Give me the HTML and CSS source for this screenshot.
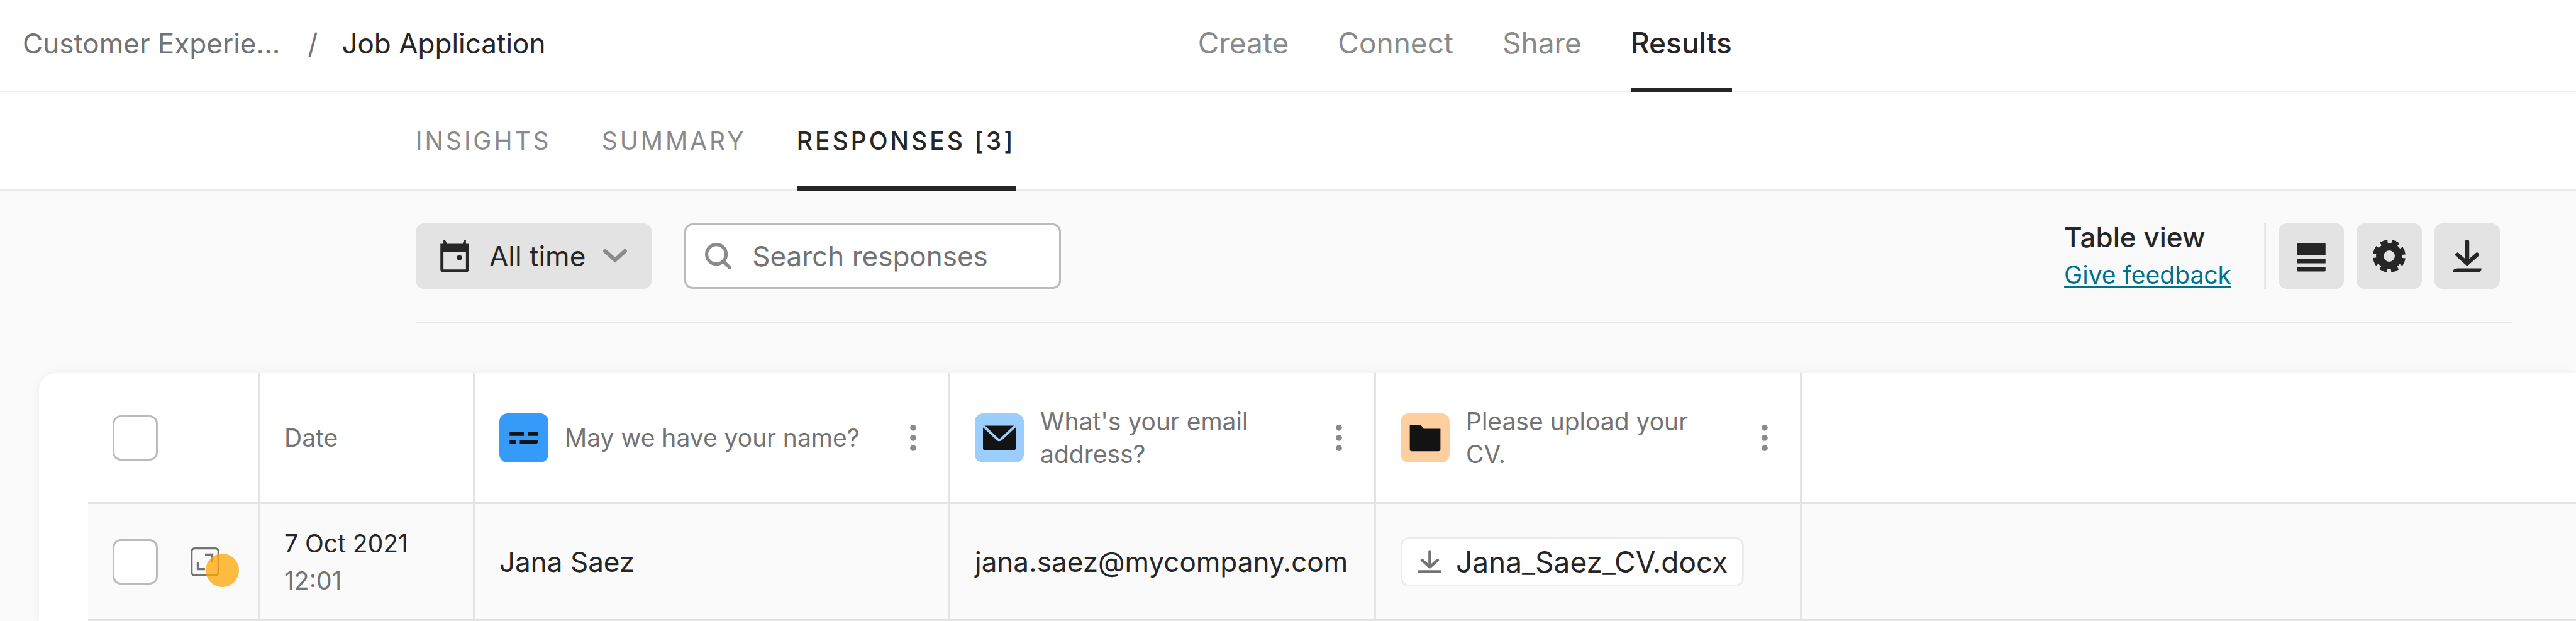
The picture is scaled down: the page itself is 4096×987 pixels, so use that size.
FILE: index.html
```html
<!DOCTYPE html>
<html lang="en">

<head>
    <meta charset="utf-8">
    <title>Job Application - Results</title>
    <link rel="stylesheet" href="styles.css">
</head>

<body>
    <header class="topbar">
        <div class="breadcrumb">
            <a href="#">Customer Experie...</a>
            <span>/</span>
            <strong>Job Application</strong>
        </div>
        <nav class="main-nav">
            <a href="#">Create</a>
            <a href="#">Connect</a>
            <a href="#">Share</a>
            <a href="#" class="active">Results</a>
        </nav>
    </header>

    <nav class="tabs">
        <a href="#">INSIGHTS</a>
        <a href="#">SUMMARY</a>
        <a href="#" class="active">RESPONSES [3]</a>
    </nav>

    <section class="toolbar">
        <button type="button" class="period">
            <svg class="icon-calendar" viewBox="0 0 14 16">
                <path fill="#262626" fill-rule="evenodd" d="M1.500 0Q3 .3 3 2h8Q11 .3 12.500 0v2H14v12.500a1.500 1.500 0 0 1-1.500 1.500h-11A1.500 1.500 0 0 1 0 14.500V2h1.500zM1.500 6v8.500h11V6z" />
                <circle cx="9.300" cy="8.800" r="1.300" fill="#262626" />
            </svg>
            All time
            <svg class="icon-chevron" viewBox="0 0 12 7">
                <path fill="none" stroke="#8a8a8a" stroke-width="2" stroke-linecap="round" d="M1 1l5 4.500L11 1" />
            </svg>
        </button>
        <label class="search">
            <svg class="icon-search" viewBox="0 0 13 13">
                <circle cx="5.600" cy="5.600" r="4.800" fill="none" stroke="#8a8a8a" stroke-width="1.600" />
                <path stroke="#8a8a8a" stroke-width="1.600" stroke-linecap="round" d="M9 9l3.200 3.200" />
            </svg>
            <input type="text" placeholder="Search responses" aria-label="Search responses">
        </label>
        <div class="view">
            <span class="view-name">Table view</span>
            <a href="#">Give feedback</a>
        </div>
        <div class="actions">
            <button type="button" aria-label="Row height">
                <svg viewBox="0 0 16 16" fill="#262626">
                    <path d="M1 7.500V2a.5.5 0 0 1 .5-.5h13a.5.5 0 0 1 .5.5v5.500zM1 9.500h14v2H1zM1 13.500h14V15a.5.5 0 0 1-.5.5h-13A.5.5 0 0 1 1 15z" />
                </svg>
            </button>
            <button type="button" aria-label="Settings">
                <svg viewBox="0 0 16 16">
                    <circle cx="8" cy="8" r="4.600" fill="none" stroke="#262626" stroke-width="3.700" />
                    <circle cx="8" cy="8" r="7" fill="none" stroke="#262626" stroke-width="2" stroke-dasharray="3.500 1.998" stroke-dashoffset="-1" />
                </svg>
            </button>
            <button type="button" aria-label="Download">
                <svg viewBox="0 0 16 16" fill="none" stroke="#262626" stroke-width="2">
                    <path stroke-linecap="round" d="M8 1v10M3.200 7.300L8 11.600 12.800 7.300" />
                    <path fill="#262626" stroke="none" d="M1 16q0-2 2-2h12q0 2-2 2z" />
                </svg>
            </button>
        </div>
    </section>

    <main class="card">
        <table>
            <colgroup>
                <col class="col-select">
                <col class="col-date">
                <col class="col-name">
                <col class="col-answer">
                <col class="col-answer">
                <col>
            </colgroup>
            <thead>
                <tr>
                    <th class="select"><input type="checkbox" aria-label="Select all"></th>
                    <th>Date</th>
                    <th>
                        <div class="question">
                            <span class="tile blue">
                                <svg viewBox="0 0 16 16" fill="#131313">
                                    <path d="M1 5h7v2H1zM10 5h5v2h-5zM1 9h3v2H1zM6 9h9v.5a1.500 1.500 0 0 1-1.500 1.500H6z" />
                                </svg>
                            </span>
                            <span class="question-text">May we have your name?</span>
                            <button type="button" class="more" aria-label="Column menu">
                                <svg viewBox="0 0 3 13" fill="#8a8a8a">
                                    <circle cx="1.500" cy="1.500" r="1.500" />
                                    <circle cx="1.500" cy="6.500" r="1.500" />
                                    <circle cx="1.500" cy="11.500" r="1.500" />
                                </svg>
                            </button>
                        </div>
                    </th>
                    <th>
                        <div class="question">
                            <span class="tile light-blue">
                                <svg viewBox="0 0 16 16">
                                    <path fill="#131313" d="M0 2h16v11a1 1 0 0 1-1 1H1a1 1 0 0 1-1-1z" />
                                    <path fill="none" stroke="#9bcdfd" stroke-width="1.200" d="M0 2l7.200 6.700a1.200 1.200 0 0 0 1.600 0L16 2" />
                                </svg>
                            </span>
                            <span class="question-text">What's your email address?</span>
                            <button type="button" class="more" aria-label="Column menu">
                                <svg viewBox="0 0 3 13" fill="#8a8a8a">
                                    <circle cx="1.500" cy="1.500" r="1.500" />
                                    <circle cx="1.500" cy="6.500" r="1.500" />
                                    <circle cx="1.500" cy="11.500" r="1.500" />
                                </svg>
                            </button>
                        </div>
                    </th>
                    <th>
                        <div class="question">
                            <span class="tile orange">
                                <svg viewBox="0 0 16 16">
                                    <path fill="#131313" d="M.5 1.500h4.800a1 1 0 0 1 .8.4l1.200 1.600h8.200V13.500a1 1 0 0 1-1 1h-13a1 1 0 0 1-1-1z" />
                                </svg>
                            </span>
                            <span class="question-text">Please upload your CV.</span>
                            <button type="button" class="more" aria-label="Column menu">
                                <svg viewBox="0 0 3 13" fill="#8a8a8a">
                                    <circle cx="1.500" cy="1.500" r="1.500" />
                                    <circle cx="1.500" cy="6.500" r="1.500" />
                                    <circle cx="1.500" cy="11.500" r="1.500" />
                                </svg>
                            </button>
                        </div>
                    </th>
                    <th></th>
                </tr>
            </thead>
            <tbody>
                <tr>
                    <td class="select">
                        <div class="select-tools">
                            <input type="checkbox" aria-label="Select response">
                            <button type="button" class="expand" aria-label="Open response">
                                <svg viewBox="0 0 14 14" fill="none" stroke="#737373">
                                    <rect x=".5" y=".5" width="13" height="13" rx="1.500" />
                                    <path d="M7 3.500h3.500V7M3.500 7v3.500H7" />
                                </svg>
                                <span class="pointer"></span>
                            </button>
                        </div>
                    </td>
                    <td class="date">7 Oct 2021<br><span>12:01</span></td>
                    <td>Jana Saez</td>
                    <td>jana.saez@mycompany.com</td>
                    <td>
                        <a href="#" class="file">
                            <svg viewBox="0 0 12 12" fill="none" stroke="#737373" stroke-width="1.500">
                                <path stroke-linecap="round" d="M6 .8v7.700M2 5.300l4 3.500 4-3.500" />
                                <path d="M0 11.200h12" />
                            </svg>
                            Jana_Saez_CV.docx
                        </a>
                    </td>
                    <td></td>
                </tr>
            </tbody>
        </table>
    </main>
</body>

</html>
```
FILE: styles.css
```css
* {
    box-sizing: border-box;
}

body {
    margin: 0;
    background-color: #fafafa;
    color: #262626;
    font-family: Inter, "Liberation Sans", sans-serif;
    font-size: 44px;
    line-height: 60px;
    overflow-x: hidden;
}

a {
    color: inherit;
    text-decoration: none;
}

button,
input {
    margin: 0;
    font: inherit;
    color: inherit;
}

button {
    border: 0;
    padding: 0;
    background: none;
}

svg {
    display: block;
    flex: none;
}

/* top bar */

.topbar {
    display: grid;
    grid-template-columns: 46.5% 1fr;
    height: 147px;
    background-color: #fff;
    border-bottom: 3px solid #ececec;
}

.breadcrumb {
    display: flex;
    align-items: center;
    gap: 44px;
    padding: 0 36px 6px;
    color: #737373;
}

.breadcrumb strong {
    margin-left: -6px;
    font-weight: 400;
    color: #262626;
}

.main-nav,
.tabs {
    display: flex;
    color: #8a8a8a;
}

.main-nav {
    gap: 78px;
    font-size: 46px;
}

.main-nav a,
.tabs a {
    display: flex;
    align-items: center;
    margin-bottom: -3px;
    border-bottom: 7px solid transparent;
}

.main-nav a {
    padding-bottom: 4px;
}

.tabs a {
    padding-top: 4px;
}

.main-nav a.active,
.tabs a.active {
    color: #262626;
    font-weight: 500;
    border-color: #262626;
}

.tabs {
    gap: 80px;
    height: 156px;
    padding-left: 661px;
    background-color: #fff;
    border-bottom: 3px solid #ececec;
    font-size: 39px;
    letter-spacing: 4px;
}

/* filters and view actions */

.toolbar {
    display: flex;
    align-items: center;
    height: 211px;
    margin: 0 101px 79px 661px;
    padding-right: 20px;
    border-bottom: 3px solid #e8e8e8;
}

.period {
    display: flex;
    align-items: center;
    height: 104px;
    padding: 0 39px;
    margin-right: 52px;
    border-radius: 13px;
    background-color: #e3e3e3;
}

.icon-calendar {
    width: 46px;
    height: 52px;
    margin-right: 32px;
}

.icon-chevron {
    width: 38px;
    height: 22px;
    margin-left: 28px;
}

.search {
    display: flex;
    align-items: center;
    gap: 33px;
    width: 599px;
    height: 104px;
    padding: 0 30px;
    border: 3px solid #bbb;
    border-radius: 13px;
    background-color: #fff;
}

.icon-search {
    width: 42px;
    height: 42px;
}

.search input {
    flex: 1;
    min-width: 0;
    padding: 0;
    border: 0;
    outline: 0;
    background: none;
}

.search input::placeholder {
    color: #737373;
    opacity: 1;
}

.view {
    display: flex;
    flex-direction: column;
    margin-left: auto;
    margin-right: 52px;
}

.view-name {
    font-weight: 500;
}

.view a {
    font-size: 39px;
    color: #00718f;
    text-decoration: underline;
    text-decoration-thickness: 3px;
    text-underline-offset: 3px;
    text-decoration-skip-ink: none;
}

.actions {
    display: flex;
    gap: 20px;
    padding-left: 20px;
    border-left: 3px solid #e8e8e8;
}

.actions button {
    display: flex;
    align-items: center;
    justify-content: center;
    width: 104px;
    height: 104px;
    border-radius: 13px;
    background-color: #e3e3e3;
}

.actions svg {
    width: 52px;
    height: 52px;
}

/* responses table */

.card {
    margin-left: 62px;
    padding-left: 78px;
    border-radius: 26px 0 0 0;
    background-color: #fff;
    box-shadow: 0 0 16px rgba(0, 0, 0, 0.05);
}

table {
    width: 100%;
    table-layout: fixed;
    border-spacing: 0;
}

.col-select {
    width: 273px;
}

.col-date {
    width: 342px;
}

.col-name {
    width: 756px;
}

.col-answer {
    width: 677px;
}

th,
td {
    padding: 0 0 0 39px;
    border-right: 3px solid #e3e3e3;
    border-bottom: 3px solid #e3e3e3;
    text-align: left;
    vertical-align: middle;
}

th:last-child,
td:last-child {
    border-right: 0;
}

th {
    height: 208px;
    font-size: 39px;
    font-weight: 400;
    line-height: 52px;
    color: #737373;
}

td {
    height: 186px;
    background-color: #fafafa;
}

input[type="checkbox"] {
    appearance: none;
    display: block;
    width: 72px;
    height: 72px;
    border: 3px solid #bbb;
    border-radius: 13px;
    background-color: #fff;
}

.select-tools {
    display: flex;
    align-items: center;
    gap: 52px;
}

.expand {
    position: relative;
}

.expand svg {
    width: 46px;
    height: 46px;
}

.pointer {
    position: absolute;
    left: 24px;
    top: 10px;
    width: 53px;
    height: 53px;
    border-radius: 50%;
    background-color: rgba(255, 165, 0, 0.75);
}

.question {
    display: flex;
    align-items: center;
    padding-right: 30px;
}

.tile {
    display: flex;
    flex: none;
    align-items: center;
    justify-content: center;
    width: 78px;
    height: 78px;
    margin-right: 26px;
    border-radius: 13px;
}

.tile svg {
    width: 52px;
    height: 52px;
}

.blue {
    background-color: #369af9;
}

.light-blue {
    background-color: #9bcdfd;
}

.orange {
    background-color: #fecf9e;
}

.question-text {
    flex: 1;
    padding-right: 26px;
}

.more {
    display: flex;
    justify-content: center;
    width: 52px;
}

.more svg {
    width: 10px;
    height: 42px;
}

.date {
    font-size: 39px;
    line-height: 59px;
}

.date span {
    color: #737373;
}

.file {
    display: inline-flex;
    align-items: center;
    gap: 23px;
    height: 78px;
    padding: 0 23px 0 25px;
    border: 3px solid #ececec;
    border-radius: 13px;
    background-color: #fff;
    font-size: 46px;
}

.file svg {
    width: 37px;
    height: 39px;
}
```
